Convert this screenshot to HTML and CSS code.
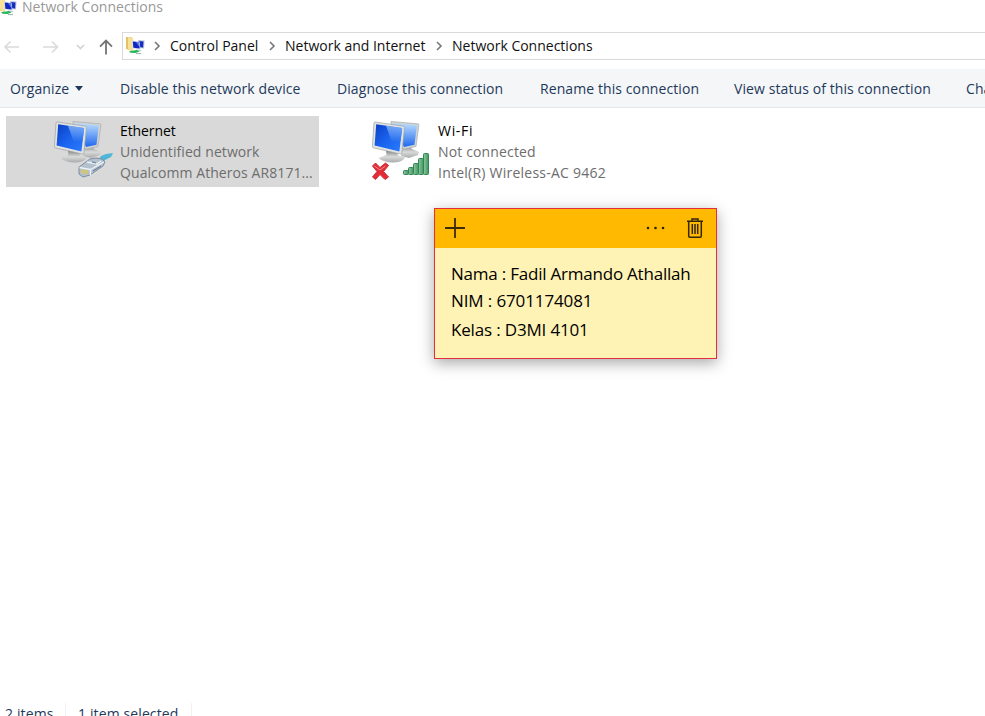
FILE: index.html
```
<!DOCTYPE html>
<html lang="en">
<head>
<meta charset="utf-8">
<title>Network Connections</title>
<link rel="stylesheet" href="styles.css">
</head>
<body>
<svg class="defs" width="0" height="0" aria-hidden="true">
  <defs>
    <linearGradient id="screen" x1="0" y1="0" x2="1" y2="1"><stop offset="0" stop-color="#0b3fc4"/><stop offset=".5" stop-color="#1a63ee"/><stop offset="1" stop-color="#2b7cff"/></linearGradient>
    <linearGradient id="glare" x1="0" y1="0" x2="0" y2="1"><stop offset="0" stop-color="#b9dcff"/><stop offset="1" stop-color="#1f68ee"/></linearGradient>
    <linearGradient id="stand" x1="0" y1="0" x2="0" y2="1"><stop offset="0" stop-color="#85888a"/><stop offset=".5" stop-color="#d9dada"/><stop offset="1" stop-color="#a9abac"/></linearGradient>
    <linearGradient id="bar" x1="0" y1="0" x2="1" y2="0"><stop offset="0" stop-color="#8fc7a0"/><stop offset="1" stop-color="#3f9660"/></linearGradient>
    <symbol id="folder-net" viewBox="0 0 20 20">
      <path d="M1 2h5l1.500 1v13L1 14z" fill="#e4c267"/><path d="M3 2l5 1v13l-5-2z" fill="#f7e196"/>
      <path d="M13 5l6.500.6-.5 8-5-.6z" fill="#b9c6dc"/><path d="M13.500 6l5 .6-.4 6-5-.6z" fill="#1a2ebd"/>
      <path d="M7 5.500l7.500 1 1 8-8-1z" fill="#d5deeb"/><path d="M7.800 6.500l6 .8.900 6.200-6.300-.8z" fill="#1126c4"/><path d="M11 7l2.800.3.700 5z" fill="#5d8bec"/>
      <path d="M11 14.500l5 .4.500 1.400-6-.2z" fill="#c4c9ce"/><path d="M4 16.300l8-1.200 2.500 1.500-4 1.400-5-.2z" fill="#25b85b"/><path d="M11 18.200h5v.9h-5z" fill="#8ea39a"/>
    </symbol>
    <symbol id="monitors" viewBox="0 0 50 44">
      <path d="M31 27h7l2 3 7 3-1 3-9 3-8-2z" fill="url(#stand)"/>
      <path d="M19 2.500L46 4.800q1 .1.900 1.100L44 27.500 33 30l-14-3z" fill="#d0d3d3" stroke="#a9acad" stroke-width=".7"/>
      <path d="M21 4.300l23.800 2.200-2.300 19.300L32 28z" fill="url(#glare)"/>
      <path d="M14 32h11l1 4.500 7 1.500q-1 5-11 5.400T6.500 39l8-3z" fill="url(#stand)"/>
      <path d="M2 4Q2.200 2.800 3.200 3L31.500 7.200q1.200.2 1 1.400L29.800 34q-.2 1.200-1.300 1L1.300 28.800Q.2 28.500.4 27.300z" fill="#e2e4e4" stroke="#9da0a1" stroke-width=".7"/>
      <path d="M4.200 5.300l26 3.800-2.800 23.300L2.600 26.500z" fill="url(#screen)"/>
      <path d="M14 6.700l16.200 2.400-1.600 12.900L20 23.500z" fill="url(#glare)" opacity=".6"/>
    </symbol>
  </defs>
</svg>
<div class="window">
  <header class="titlebar">
    <svg class="title-icon" width="20" height="20"><use href="#folder-net"/></svg>
    <span>Network Connections</span>
  </header>
  <nav class="navbar">
    <svg class="arrows" width="122" height="28" fill="none" stroke-width="1.600">
      <path d="M19 15H5m5.500-5.500L5 15l5.500 5.500M43 15h14.500M52 9.500l5.500 5.500-5.500 5.500" stroke="#dadada"/>
      <path d="M77 13l3.500 3.500L84 13" stroke="#d2d2d2"/>
      <path d="M106 22.500V8.500m-6 6.200l6-6.200 6 6.200" stroke="#747474" stroke-width="1.800"/>
    </svg>
    <div class="address">
      <svg class="address-icon" width="20" height="20"><use href="#folder-net"/></svg>
      <svg class="chev" width="8" height="10"><path d="M2 1l4 4-4 4"/></svg>
      <span class="crumb control">Control Panel</span>
      <svg class="chev" width="8" height="10"><path d="M2 1l4 4-4 4"/></svg>
      <span class="crumb internet">Network and Internet</span>
      <svg class="chev" width="8" height="10"><path d="M2 1l4 4-4 4"/></svg>
      <span class="crumb">Network Connections</span>
    </div>
  </nav>
  <div class="commands">
    <span class="organize">Organize <i class="caret"></i></span>
    <span>Disable this network device</span>
    <span>Diagnose this connection</span>
    <span>Rename this connection</span>
    <span>View status of this connection</span>
    <span>Change settings of this connection</span>
  </div>
  <main class="items">
    <section class="item selected">
      <svg class="device" width="64" height="64">
        <use href="#monitors" x="0" y="3" width="50" height="44"/>
        <path d="M44 45l3-5 5-2 7-1-2 4-6 3-3 4z" fill="#4fb6d6"/>
        <path d="M25 51l11-8q6-2 12 0l3 3-2 4-13 9-7 2-4-3z" fill="#b4c0ce" stroke="#74879b" stroke-width=".9"/>
        <path d="M25.500 51.500l11 2v6M36.500 53.500L50 46M33 46l10 2 4-3" fill="none" stroke="#eef4f8" stroke-width="1.300"/>
        <path d="M27 53l7 1.500v4L27 57z" fill="#cfc67c"/><path d="M39 55l8-5M38 46l4 1" stroke="#5f7692"/>
      </svg>
      <div class="lines"><b>Ethernet</b><span>Unidentified network</span><span class="adapter">Qualcomm Atheros AR8171...</span></div>
    </section>
    <section class="item wifi">
      <svg class="device" width="64" height="64">
        <use href="#monitors" x="0" y="3" width="50" height="44"/>
        <g transform="translate(-.5 2)">
          <path d="M1 48l3-3 4.500 4.500L14 45l3 2.500-5 6 5 5.500-3.500 2.500-5-5L4 61.500l-3-2.500 4.500-5.500z" fill="#e32d36" stroke="#c9303a" stroke-width="1"/>
          <path d="M3 48l5.500 4L14 48" stroke="#f58b8b" fill="none"/>
        </g>
        <g fill="url(#bar)" stroke="#318453"><rect x="31.500" y="54.500" width="5" height="4" rx="1"/><rect x="36.500" y="51.500" width="5" height="7" rx="1"/><rect x="41.500" y="47.500" width="5" height="11" rx="1"/><rect x="46.500" y="42.500" width="5" height="16" rx="1"/><rect x="51.500" y="37.500" width="5" height="21" rx="1"/></g>
      </svg>
      <div class="lines"><b>Wi-Fi</b><span>Not connected</span><span class="adapter">Intel(R) Wireless-AC 9462</span></div>
    </section>
  </main>
  <footer class="status"><span class="count">2 items</span><span class="picked">1 item selected</span></footer>
</div>
<aside class="note">
  <div class="note-bar">
    <svg width="20" height="20"><path d="M10 0v20M0 10h20" stroke="#3a2c0c" stroke-width="1.800"/></svg>
    <svg class="more" width="20" height="20" fill="#2e2308"><circle cx="2" cy="10" r="1.300"/><circle cx="9.500" cy="10" r="1.300"/><circle cx="17" cy="10" r="1.300"/></svg>
    <svg width="18" height="20" fill="none" stroke="#33270a" stroke-width="1.500"><path d="M1 3.300h16M6 3V1h6v2M2.700 3.500V18q0 1.200 1.200 1.200h10.200q1.200 0 1.200-1.200V3.500M6.300 6v10M9 6v10M11.700 6v10"/></svg>
  </div>
  <div class="note-body"><p class="name">Nama : Fadil Armando Athallah</p><p class="nim">NIM : 6701174081</p><p class="class">Kelas : D3MI 4101</p></div>
</aside>
</body>
</html>
```
FILE: styles.css
```
* { box-sizing: border-box; }
body {
  margin: 0;
  background: #fff;
  font: 14px/21px "Open Sans", "Noto Sans", sans-serif;
  color: #111;
  overflow: hidden;
  white-space: nowrap;
}
.defs { position: absolute; }
.window { height: 716px; display: flex; flex-direction: column; overflow: hidden; }
.titlebar { height: 32px; display: flex; color: #999; line-height: 14px; letter-spacing: .02px; }
.title-icon { margin: -4px 5px 0 -3px; }
.navbar { height: 28px; display: flex; }
.arrows { flex: none; }
.address { flex: 1; height: 28px; display: flex; align-items: center; border: 1px solid #d9d9d9; border-right: 0; padding-left: 2px; }
.address-icon { margin: -2px 8px 0 0; }
.chev { margin-right: 9px; fill: none; stroke: #777; stroke-width: 1.6; }
.crumb { line-height: 26px; }
.crumb.control { width: 98px; }
.crumb.internet { width: 150px; }
.commands {
  flex: none;
  height: 39px;
  margin-top: 9px;
  padding-left: 10px;
  display: grid;
  grid-template-columns: 110px 217px 203px 194px 232px 300px;
  background: #f4f6f8;
  border-bottom: 1px solid #e5e7e9;
  color: #1e395b;
  line-height: 39px;
  letter-spacing: .09px;
}
.caret { display: inline-block; border: 4px solid transparent; border-top: 5px solid #1e395b; border-bottom: 0; vertical-align: 3px; margin-left: 2px; }
.items { flex: 1; display: flex; padding: 8px 6px; gap: 5px; align-items: flex-start; }
.item { width: 313px; height: 71px; display: flex; padding-left: 48px; }
.selected { background: #d9d9d9; }
.device { flex: none; margin-right: 2px; }
.lines { display: flex; flex-direction: column; padding-top: 4px; color: #6d6d6d; letter-spacing: .08px; }
.lines b { font-weight: 400; color: #000; letter-spacing: -.1px; }
.wifi .lines b { letter-spacing: .7px; }
.wifi .lines { letter-spacing: .15px; }
.wifi .adapter { letter-spacing: .24px; }
.status { height: 13px; display: flex; padding-left: 5px; color: #1e395b; letter-spacing: .12px; }
.status span { border-right: 1px solid #f1f1f1; }
.count { width: 61px; }
.picked { width: 126px; padding-left: 12px; }
.note {
  position: absolute;
  left: 434px;
  top: 208px;
  width: 283px;
  height: 151px;
  border: 1px solid #e52e3d;
  background: #fff2b5;
  box-shadow: 0 4px 14px rgba(0,0,0,.35);
}
.note-bar { height: 39px; background: #ffb900; display: flex; align-items: center; padding: 0 12px 2px 10px; }
.more { margin: 0 20px 0 auto; }
.note-body { padding: 12px 16px; font-size: 17px; line-height: 27px; color: #000; }
.note-body p { margin: 0; }
.note-body .name { letter-spacing: -.22px; }
.note-body .nim { letter-spacing: -.12px; }
.note-body .class { padding-top: 2px; letter-spacing: -.17px; }
```
